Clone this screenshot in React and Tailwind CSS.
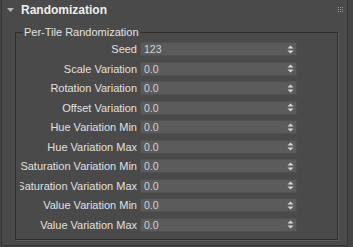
import React from "react";

const rows = [
  { label: "Seed", value: "123" },
  { label: "Scale Variation", value: "0.0" },
  { label: "Rotation Variation", value: "0.0" },
  { label: "Offset Variation", value: "0.0" },
  { label: "Hue Variation Min", value: "0.0" },
  { label: "Hue Variation Max", value: "0.0" },
  { label: "Saturation Variation Min", value: "0.0" },
  { label: "Saturation Variation Max", value: "0.0" },
  { label: "Value Variation Min", value: "0.0" },
  { label: "Value Variation Max", value: "0.0" },
];

const Spinner = () => (
  <svg width="7" height="9" viewBox="0 0 7 9" className="shrink-0">
    <path d="M3.5 0.5 L6.5 3.5 L0.5 3.5 Z" fill="#d8d8d8" />
    <path d="M0.5 5.5 L6.5 5.5 L3.5 8.5 Z" fill="#d8d8d8" />
  </svg>
);

const Grip = () => (
  <svg width="6" height="6" viewBox="0 0 6 6">
    {[0, 2, 4].map((y) =>
      [0, 2, 4].map((x) => (
        <rect key={`${x}-${y}`} x={x} y={y} width="1" height="1" fill="#9c9c9c" />
      ))
    )}
  </svg>
);

const App = () => {
  return (
    <div
      className="w-[353px] h-[247px] bg-[#444444] pl-[1px] pr-[5px] pb-[1px] overflow-hidden"
      style={{ fontFamily: '"Liberation Sans", Arial, sans-serif' }}
    >
      <div className="h-full bg-[#4a4a4a] border-l border-r border-b border-[#363636] flex flex-col">
        {/* Rollout header */}
        <div className="h-[26px] flex items-start justify-between pt-[3px] pl-[5px] pr-[3px]">
          <div className="flex items-center gap-[6px]">
            <svg width="7" height="5" viewBox="0 0 7 5" className="mt-[1px]">
              <path d="M0 0 L7 0 L3.5 4 Z" fill="#b4b4b4" />
            </svg>
            <span className="text-[12px] leading-[14px] font-bold text-[#efefef] ml-[1px]">
              Randomization
            </span>
          </div>
          <div className="pt-[4px]">
            <Grip />
          </div>
        </div>

        {/* Group box */}
        <fieldset className="ml-[13px] w-[323px] border border-[#2e2e2e] shadow-[1px_1px_0_#5a5a5a] pt-[4px] pb-[7px] pl-[4px]">
          <legend className="ml-[3px] px-[1px] text-[11px] leading-[12px] text-[#e2e2e2]">
            Per-Tile Randomization
          </legend>
          <div className="flex flex-col gap-[5.5px]">
            {rows.map((row) => (
              <div key={row.label} className="flex items-center h-[14px] gap-[3px]">
                <div className="w-[117px] flex justify-end overflow-hidden">
                  <span className="shrink-0 whitespace-nowrap text-[11px] leading-[14px] text-[#e0e0e0]">
                    {row.label}
                  </span>
                </div>
                <div className="w-[157px] h-[14px] bg-[#5b5b5b] border border-[#505050] flex items-center justify-between pl-[3px] pr-[2px]">
                  <span className="text-[10.5px] leading-[12px] text-[#d2d2d2]">
                    {row.value}
                  </span>
                  <Spinner />
                </div>
              </div>
            ))}
          </div>
        </fieldset>
      </div>
    </div>
  );
};

export default App;
